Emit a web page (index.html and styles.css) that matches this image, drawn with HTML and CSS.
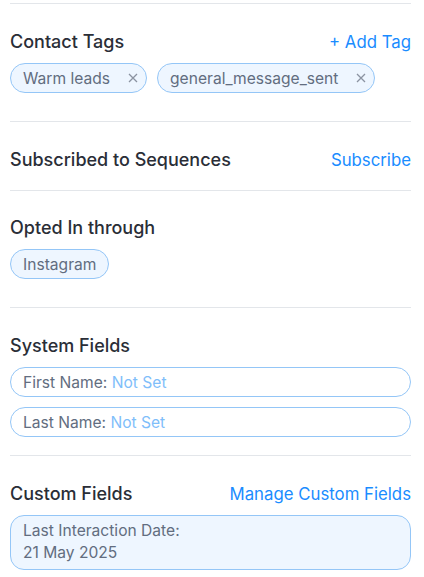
FILE: index.html
```html
<!DOCTYPE html>
<html>
<head>
<meta charset="utf-8">
<link rel="stylesheet" href="styles.css">
</head>
<body>
<div class="panel">
  <section class="section">
    <div class="head">
      <h3 class="title">Contact Tags</h3>
      <a class="link">+ Add Tag</a>
    </div>
    <div class="chips">
      <span class="chip">Warm leads<svg class="x" viewBox="0 0 10 10"><path d="M1 1L9 9M9 1L1 9"/></svg></span>
      <span class="chip">general_message_sent<svg class="x" viewBox="0 0 10 10"><path d="M1 1L9 9M9 1L1 9"/></svg></span>
    </div>
  </section>
  <section class="section short">
    <div class="head">
      <h3 class="title">Subscribed to Sequences</h3>
      <a class="link">Subscribe</a>
    </div>
  </section>
  <section class="section tight">
    <div class="head">
      <h3 class="title">Opted In through</h3>
    </div>
    <div class="chips">
      <span class="chip plain">Instagram</span>
    </div>
  </section>
  <section class="section short">
    <div class="head">
      <h3 class="title">System Fields</h3>
    </div>
    <div class="fields">
      <div class="field">First Name: <span class="notset">Not Set</span></div>
      <div class="field">Last Name: <span class="notset">Not Set</span></div>
    </div>
  </section>
  <section class="section short">
    <div class="head">
      <h3 class="title">Custom Fields</h3>
      <a class="link">Manage Custom Fields</a>
    </div>
    <div class="custom">Last Interaction Date:<br>21 May 2025</div>
  </section>
</div>
</body>
</html>
```
FILE: styles.css
```css
* { box-sizing: border-box; }
body {
  margin: 0;
  background: #ffffff;
  font-family: Inter, "Noto Sans", sans-serif;
}
.panel {
  padding: 3px 13px 0 10px;
}
.section {
  border-top: 1px solid #e3e6ea;
  padding: 26px 0 28px;
  display: flex;
  flex-direction: column;
  gap: 9px;
}
.section.short { padding-bottom: 18px; }
.section.tight { padding-top: 25px; }
.head {
  display: flex;
  justify-content: space-between;
  align-items: center;
  height: 24px;
}
.title {
  margin: 0;
  font-size: 18px;
  font-weight: 500;
  color: #2a2e37;
  line-height: 24px;
}
.link {
  font-size: 16.8px;
  color: #1a8cff;
  line-height: 24px;
}
.chips {
  display: flex;
  gap: 10px;
}
.chip {
  display: inline-flex;
  align-items: center;
  height: 30px;
  padding: 0 8px 0 12px;
  border: 1px solid #94c6f7;
  border-radius: 15px;
  background: #eef6ff;
  color: #626d80;
  font-size: 15.6px;
}
.chip.plain { padding-right: 12px; }
.x {
  width: 10px;
  height: 10px;
  margin-left: 18px;
  stroke: #8b93a1;
  stroke-width: 1.3;
  fill: none;
}
.fields {
  display: flex;
  flex-direction: column;
  gap: 10px;
}
.field {
  height: 30px;
  border: 1px solid #94c6f7;
  border-radius: 15px;
  padding: 0 12px;
  display: flex;
  align-items: center;
  font-size: 15.6px;
  color: #626d80;
  white-space: pre;
}
.notset { color: #7fbefa; }
.custom {
  border: 1px solid #94c6f7;
  border-radius: 14px;
  background: #eef6ff;
  padding: 4px 12px 5px;
  font-size: 15.6px;
  line-height: 22px;
  color: #626d80;
}
```
